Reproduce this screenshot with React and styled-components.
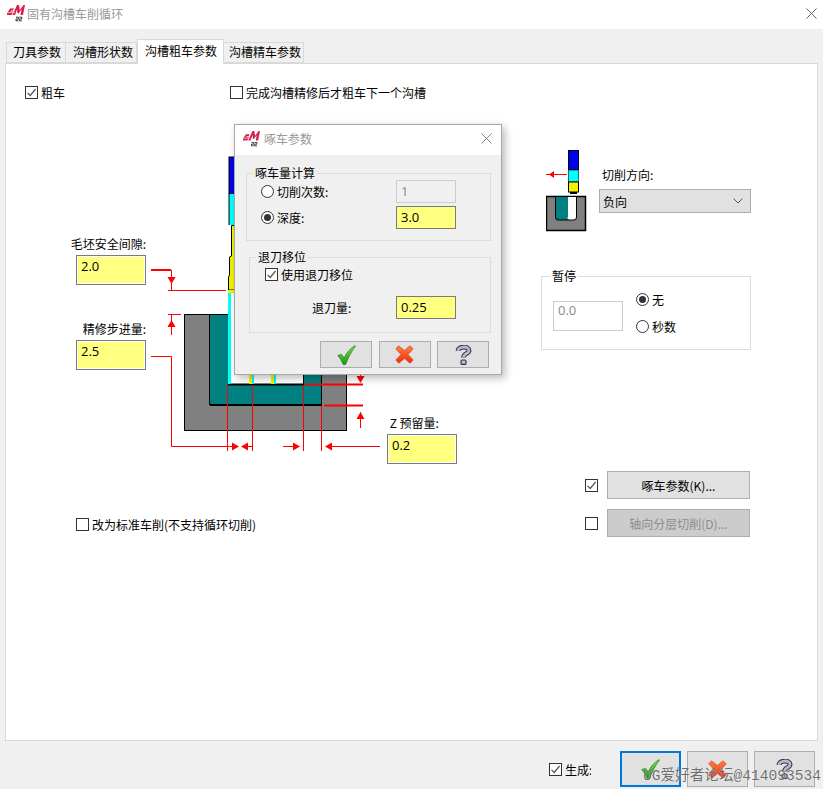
import React from 'react';
import styled, { createGlobalStyle } from 'styled-components';

const GlobalStyle = createGlobalStyle`
  html, body {
    margin: 0;
    padding: 0;
    background: #f0f0f0;
  }
  * {
    box-sizing: border-box;
  }
`;

const Window = styled.div`
  position: relative;
  width: 823px;
  height: 789px;
  overflow: hidden;
  display: flex;
  flex-direction: column;
  background: #f0f0f0;
  color: #000;
  font-family: "Noto Sans", "Noto Sans CJK SC", sans-serif;
  font-size: 12px;
`;

const TitleBar = styled.div`
  flex: none;
  height: ${({ $height }) => $height}px;
  padding: 0 ${({ $right }) => $right}px 3px ${({ $left }) => $left}px;
  display: flex;
  align-items: center;
  gap: ${({ $gap }) => $gap}px;
  background: #fff;
`;

const TitleText = styled.span`
  flex: 1;
  color: #999;
  font-family: "Noto Sans CJK SC", sans-serif;
  font-size: 12px;
`;

const TabStrip = styled.div`
  flex: none;
  height: 34px;
  padding: 9px 0 0 6px;
  display: flex;
  align-items: flex-end;
  position: relative;
  z-index: 1;
`;

const Tab = styled.div`
  height: ${({ $active }) => ($active ? 25 : 21)}px;
  margin-bottom: ${({ $active }) => ($active ? -1 : 0)}px;
  padding: 0 ${({ $trail }) => $trail}px ${({ $active }) => ($active ? 4 : 2)}px ${({ $lead }) => $lead}px;
  display: flex;
  align-items: center;
  background: ${({ $active }) => ($active ? '#fff' : '#f0f0f0')};
  border: 1px solid #d9d9d9;
  border-bottom: ${({ $active }) => ($active ? 'none' : '1px solid #d9d9d9')};
  border-left-width: ${({ $first, $active }) => ($first || $active ? 1 : 0)}px;
  font-family: "Noto Sans CJK SC", sans-serif;
`;

const Panel = styled.div`
  flex: none;
  height: 678px;
  margin: 0 5px 0 5px;
  background: #fff;
  border: 1px solid #d9d9d9;
  display: flex;
  flex-direction: column;
`;

const OptionsRow = styled.div`
  flex: none;
  height: 44px;
  padding: 21px 0 0 19px;
  display: grid;
  grid-template-columns: 205px 1fr;
  align-items: start;
`;

const Check = styled.label`
  display: inline-flex;
  align-items: center;
  gap: ${({ $gap = 3 }) => $gap}px;
  height: 14px;
  font-family: "Noto Sans CJK SC", sans-serif;
  white-space: nowrap;
`;

const CheckBox = styled.span`
  flex: none;
  width: 13px;
  height: 13px;
  border: 1px solid #333;
  background: #fff;
  display: flex;
  align-items: center;
  justify-content: center;
`;

const Workspace = styled.div`
  flex: none;
  height: 363px;
  display: grid;
  grid-template-columns: 535px 210px;
`;

const Diagram = styled.div`
  position: relative;
  margin-left: 54px;
  height: 100%;
`;

const DiagramArt = styled.svg`
  display: block;
  width: 480px;
  height: 363px;
`;

const DiagramField = styled.div`
  position: absolute;
  left: ${({ $x }) => $x - 60}px;
  top: ${({ $y }) => $y - 108}px;
  width: ${({ $width }) => $width}px;
  display: flex;
  flex-direction: column;
  align-items: ${({ $align }) => $align || 'flex-end'};
  gap: 3px;
  font-family: "Noto Sans CJK SC", sans-serif;
  white-space: nowrap;
`;

const NumberBox = styled.input`
  display: block;
  width: ${({ $width }) => $width}px;
  height: ${({ $height }) => $height}px;
  padding: 0 0 ${({ $drop = 4 }) => $drop}px 4px;
  border: 1px solid ${({ disabled }) => (disabled ? '#cccccc' : '#7a7a7a')};
  outline: none;
  border-radius: 0;
  background: ${({ disabled }) => (disabled ? 'transparent' : '#ffff80')};
  box-shadow: ${({ $ring }) => ($ring ? 'inset 0 0 0 1px #fff' : 'none')};
  color: ${({ disabled }) => (disabled ? '#8a8a8a' : '#000')};
  font-family: "Open Sans", sans-serif;
  font-size: 13px;
`;

const SideColumn = styled.div`
  display: flex;
  flex-direction: column;
  padding-top: 42px;
`;

const DirectionRow = styled.div`
  display: flex;
  height: 119px;
  padding-left: 5px;
  gap: 12px;
`;

const DirectionControl = styled.div`
  width: 152px;
  padding-top: 16px;
  font-family: "Noto Sans CJK SC", sans-serif;
  display: flex;
  flex-direction: column;
  gap: 6px;

  span {
    padding-left: 3px;
  }
`;

const Dropdown = styled.div`
  height: 24px;
  padding: 0 7px 0 3px;
  display: flex;
  align-items: center;
  justify-content: space-between;
  background: #e1e1e1;
  border: 1px solid #adadad;
`;

const PauseGroup = styled.fieldset`
  margin: 0;
  height: 81px;
  padding: 18px 0 0 11px;
  border: 1px solid #dcdcdc;
  display: flex;
  gap: 13px;
  font-family: "Noto Sans CJK SC", sans-serif;
`;

const GroupTitle = styled.legend`
  padding: 0 2px;
  margin-left: ${({ $indent = 6 }) => $indent}px;
  font-family: "Noto Sans CJK SC", sans-serif;
  font-size: 12px;
  line-height: 14px;
`;

const RadioColumn = styled.div`
  display: flex;
  flex-direction: column;
  gap: 13px;
  margin-top: -9px;
`;

const Radio = styled.label`
  display: flex;
  align-items: center;
  gap: 3px;
  height: 14px;
  font-family: "Noto Sans CJK SC", sans-serif;
`;

const RadioDot = styled.span`
  flex: none;
  width: 13px;
  height: 13px;
  border-radius: 50%;
  border: 1px solid #333;
  background: #fff;
  display: flex;
  align-items: center;
  justify-content: center;

  &::after {
    content: "";
    display: ${({ $on }) => ($on ? 'block' : 'none')};
    width: 7px;
    height: 7px;
    border-radius: 50%;
    background: #333;
  }
`;

const LowerRow = styled.div`
  flex: none;
  display: flex;
  justify-content: space-between;
  align-items: flex-end;
  padding: 0 67px 0 70px;
`;

const StandardTurn = styled.div`
  padding-bottom: 2px;
`;

const ActionColumn = styled.div`
  display: flex;
  flex-direction: column;
  gap: 10px;
`;

const ActionRow = styled.div`
  display: flex;
  align-items: center;
  gap: 9px;
`;

const Button = styled.button`
  flex: none;
  width: ${({ $width }) => $width}px;
  height: ${({ $height }) => $height}px;
  padding: 0;
  display: flex;
  align-items: center;
  justify-content: center;
  background: ${({ disabled }) => (disabled ? '#cccccc' : '#e1e1e1')};
  border: ${({ $focus }) => ($focus ? '2px solid #0078d7' : '1px solid #adadad')};
  border-radius: 0;
  color: ${({ disabled }) => (disabled ? '#8c8c8c' : '#000')};
  font-family: "Noto Sans CJK SC", sans-serif;
  font-size: 12px;
`;

const Footer = styled.div`
  flex: 1;
  padding: 10px 8px 0 0;
  display: flex;
  justify-content: flex-end;
  align-items: flex-start;
  gap: 6px;
`;

const GenerateSlot = styled.div`
  width: 42px;
  height: 36px;
  margin-right: 23px;
  display: flex;
  align-items: center;
  overflow: hidden;
`;

const Watermark = styled.div`
  position: absolute;
  left: 643px;
  top: 766px;
  color: rgba(55, 55, 55, 0.72);
  font-family: "Liberation Mono", "Noto Sans CJK SC", monospace;
  font-size: 14.6px;
  line-height: 20px;
  white-space: nowrap;
  text-shadow: 0 0 1px rgba(255, 255, 255, 0.9);
`;

const Dialog = styled.div`
  position: absolute;
  left: 234px;
  top: 124px;
  width: 268px;
  height: 251px;
  background: #f0f0f0;
  border: 1px solid #a8a8a8;
  box-shadow: 3px 3px 8px rgba(0, 0, 0, 0.28);
  display: flex;
  flex-direction: column;
`;

const DialogBody = styled.div`
  flex: 1;
  padding: 11px 10px 0 11px;
  display: flex;
  flex-direction: column;
`;

const CalcGroup = styled.fieldset`
  margin: 0;
  height: 75px;
  padding: 0 0 0 14px;
  border: 1px solid #dcdcdc;
  display: grid;
  grid-template-columns: 135px 60px;
  grid-auto-rows: 23px;
  row-gap: 3px;
  align-items: center;
  align-content: start;
`;

const RetractGroup = styled.fieldset`
  margin: 9px 0 0 3px;
  height: 83px;
  padding: 0;
  border: 1px solid #dcdcdc;
  display: flex;
  flex-direction: column;
  font-family: "Noto Sans CJK SC", sans-serif;
`;

const RetractCheck = styled.div`
  padding: 2px 0 0 15px;
`;

const RetractAmount = styled.div`
  margin-top: 13px;
  padding-left: 62px;
  display: grid;
  grid-template-columns: 84px 60px;
  align-items: center;
`;

const DialogButtons = styled.div`
  margin: 8px 2px 0 0;
  display: flex;
  justify-content: flex-end;
  gap: 6.5px;
`;

const CheckMark = () => (
  <svg width="11" height="11" viewBox="0 0 11 11">
    <path d="M1.5 5.8 L4.2 8.5 L9.6 2" fill="none" stroke="#555" strokeWidth="1.2" />
  </svg>
);

const Tick = ({ on, children, gap }) => (
  <Check $gap={gap}>
    <CheckBox>{on && <CheckMark />}</CheckBox>
    {children}
  </Check>
);

const Logo = ({ size = 18 }) => (
  <svg width={size} height={size} viewBox="0 0 18 18">
    <path d="M0 9.5 L3 4.5 H7 L6 6.5 H4 L3.5 7.5 H6.2 L4.6 11 H0 Z" fill="#d6204d" />
    <path d="M5.5 11 L10 1 H12 L12.8 6 L16.5 1 H18 L16 11 H13.5 L14.5 5.5 L11.5 9.5 H10.5 L10 5.5 L8 11 Z" fill="#d6204d" />
    <path d="M0 8.2 L8 7.6 L7.5 8.8 L0 9.2 Z" fill="#eeb0c0" />
    <path d="M9 13.2 H11.4 V15 H9 V16.8 H11.4 M12.4 13.2 H14.8 V15 H12.4 V16.8 H14.8" fill="none" stroke="#222" strokeWidth="0.9" />
  </svg>
);

const CloseGlyph = ({ size, color }) => (
  <svg width={size} height={size} viewBox="0 0 12 12">
    <path d="M0.5 0.5 L11.5 11.5 M11.5 0.5 L0.5 11.5" stroke={color} strokeWidth="1" fill="none" />
  </svg>
);

const OkIcon = () => (
  <svg width="19" height="20" viewBox="0 0 19 20">
    <defs>
      <linearGradient id="okFill" x1="0" y1="0" x2="0" y2="1">
        <stop offset="0" stopColor="#8fe04a" />
        <stop offset="1" stopColor="#129a12" />
      </linearGradient>
    </defs>
    <path d="M0.8 10.5 L4.6 9.4 L7.2 13 C9.5 8 13 3.6 18 0.6 L18.4 1.4 C14.5 6 11.5 12 8.6 19.4 L6.2 19.4 C4.8 16 3 13 0.8 10.5 Z" fill="url(#okFill)" stroke="#1a7a1a" strokeWidth="0.7" />
  </svg>
);

const CancelIcon = () => (
  <svg width="19" height="19" viewBox="0 0 19 19">
    <defs>
      <linearGradient id="noFill" x1="0" y1="0" x2="0" y2="1">
        <stop offset="0" stopColor="#ff8040" />
        <stop offset="1" stopColor="#ee2a10" />
      </linearGradient>
    </defs>
    <path d="M3.5 0.8 L9.5 5.4 L15 0.8 L18.2 3.8 L13 9.5 L18.2 15 L15 18.2 L9.5 13.4 L3.8 18.2 L0.8 15 L6 9.5 L0.8 3.8 Z" fill="url(#noFill)" stroke="#d8401a" strokeWidth="0.7" strokeLinejoin="round" />
  </svg>
);

const HelpIcon = () => (
  <svg width="17" height="20" viewBox="0 0 17 20">
    <path d="M3 6 C3 1 14 0.6 14 5.4 C14 8.8 8.5 8.4 8.5 12.5" fill="none" stroke="#34344a" strokeWidth="4.8" />
    <path d="M3 6 C3 1 14 0.6 14 5.4 C14 8.8 8.5 8.4 8.5 12.5" fill="none" stroke="#b8b8ca" strokeWidth="2.8" />
    <rect x="6" y="15" width="5" height="4.4" rx="1" fill="#b8b8ca" stroke="#34344a" strokeWidth="1.1" />
  </svg>
);

const ArrowHead = ({ x, y, dir }) => {
  const shapes = {
    right: `${x},${y - 4} ${x + 7},${y} ${x},${y + 4}`,
    left: `${x},${y - 4} ${x - 7},${y} ${x},${y + 4}`,
    down: `${x - 4},${y} ${x},${y + 7} ${x + 4},${y}`,
    up: `${x - 4},${y} ${x},${y - 7} ${x + 4},${y}`,
  };
  return <polygon points={shapes[dir]} fill="#f00" />;
};

// drawn in page coordinates, hence the offset viewBox
const GrooveDiagram = () => (
  <DiagramArt viewBox="60 108 480 363">
    <rect x="184.5" y="314.5" width="162" height="116" fill="#808080" stroke="#000" />
    <rect x="209.5" y="314.5" width="112" height="90" fill="#008080" stroke="#000" />
    <path d="M210 405 H322" stroke="#000" strokeWidth="2" />
    <rect x="228.5" y="314" width="75" height="70.5" fill="#fff" />
    <path d="M228.5 314 V384.5 H303.5 V314" fill="none" stroke="#000" />
    <path d="M228 384.5 H304" stroke="#000" strokeWidth="2" />

    <rect x="229" y="157" width="8" height="37" fill="#0000f0" stroke="#000" />
    <rect x="229" y="194" width="8" height="31" fill="#00ffff" />
    <path d="M229 194 V225" stroke="#000" />
    <path d="M231.5 225.5 H240 V290 H228.5 V277 L229.5 275 V257 L231.5 256 Z" fill="#f2f200" stroke="#000" />
    <rect x="228" y="290" width="10" height="3" fill="#f2f200" />
    <rect x="228" y="293" width="3" height="91" fill="#00ffff" />
    <rect x="249" y="360" width="3" height="24" fill="#f2f200" />
    <rect x="252" y="360" width="2" height="24" fill="#00ffff" />
    <rect x="271" y="360" width="3" height="24" fill="#f2f200" />
    <rect x="274" y="360" width="2" height="24" fill="#00ffff" />

    <g stroke="#f00" fill="none">
      <path d="M151 270 H171" strokeWidth="2" />
      <path d="M171.5 270 V290.5" />
      <path d="M168 290.5 H226" />
      <path d="M168 314.5 H181 M171.5 314.5 V335" />
      <path d="M151 356.5 H171.5 V446.5 H228" />
      <path d="M227.5 385 V451 M252.5 385 V451 M303.5 385 V451 M321.5 406 V451" />
      <path d="M228 446.5 H233 M247 446.5 H252 M283 446.5 H294 M331 446.5 H380" />
      <path d="M305 384.5 H363 M324 405.5 H363" strokeWidth="2" />
      <path d="M360.5 360 V380 M360.5 412 V428" />
    </g>
    <ArrowHead x={171.5} y={277} dir="down" />
    <ArrowHead x={171.5} y={327} dir="up" />
    <ArrowHead x={232} y={446.5} dir="right" />
    <ArrowHead x={248} y={446.5} dir="left" />
    <ArrowHead x={293} y={446.5} dir="right" />
    <ArrowHead x={332} y={446.5} dir="left" />
    <ArrowHead x={360.5} y={376} dir="down" />
    <ArrowHead x={360.5} y={419} dir="up" />
  </DiagramArt>
);

const DirectionArt = () => (
  <svg width="41" height="82" viewBox="546 150 41 82">
    <rect x="568.5" y="150.5" width="10" height="19" fill="#0000f0" stroke="#000" />
    <rect x="568.5" y="170" width="10" height="12" fill="#00ffff" stroke="#000" strokeWidth="0.6" />
    <rect x="568.5" y="182" width="10" height="10" fill="#f2f200" stroke="#000" />
    <rect x="570" y="192" width="7" height="2" fill="#000" />
    <path d="M546 174.5 H567" stroke="#f00" />
    <polygon points="549,174.5 554,171 554,178" fill="#f00" />
    <rect x="546.5" y="196.5" width="39" height="34" fill="#808080" stroke="#000" strokeWidth="1.5" />
    <rect x="555.5" y="197" width="21" height="23" fill="#008080" />
    <path d="M567.5 197 V217 Q567.5 220 570 220 H574 Q576.5 220 576.5 217 V197 Z" fill="#fff" />
    <path d="M555.5 197 V217 Q555.5 220 558 220 H574 Q576.5 220 576.5 217 V197" fill="none" stroke="#000" />
    <path d="M567.5 197 V217" stroke="#008080" />
  </svg>
);

const Chevron = () => (
  <svg width="10" height="6" viewBox="0 0 10 6">
    <path d="M0.5 0.5 L5 5 L9.5 0.5" fill="none" stroke="#555" />
  </svg>
);

export default function App() {
  return (
    <Window>
      <GlobalStyle />
      <TitleBar $height={29} $left={7} $right={6} $gap={2}>
        <Logo />
        <TitleText>固有沟槽车削循环</TitleText>
        <CloseGlyph size={11} color="#555" />
      </TitleBar>
      <TabStrip>
        <Tab $first $lead={6} $trail={4}>刀具参数</Tab>
        <Tab $lead={7} $trail={3}>沟槽形状数</Tab>
        <Tab $active $lead={7} $trail={6}>沟槽粗车参数</Tab>
        <Tab $lead={5} $trail={2}>沟槽精车参数</Tab>
      </TabStrip>
      <Panel>
        <OptionsRow>
          <div><Tick on>粗车</Tick></div>
          <div><Tick>完成沟槽精修后才粗车下一个沟槽</Tick></div>
        </OptionsRow>
        <Workspace>
          <Diagram>
            <GrooveDiagram />
            <DiagramField $x={71} $y={235} $width={75}>
              <span>毛坯安全间隙:</span>
              <NumberBox $width={70} $height={30} $drop={9} $ring defaultValue="2.0" readOnly />
            </DiagramField>
            <DiagramField $x={76} $y={320} $width={70}>
              <span>精修步进量:</span>
              <NumberBox $width={70} $height={30} $drop={9} $ring defaultValue="2.5" readOnly />
            </DiagramField>
            <DiagramField $x={387} $y={414} $width={70} $align="flex-start">
              <span>&nbsp;Z 预留量:</span>
              <NumberBox $width={70} $height={30} $drop={9} $ring defaultValue="0.2" readOnly />
            </DiagramField>
          </Diagram>
          <SideColumn>
            <DirectionRow>
              <DirectionArt />
              <DirectionControl>
                <span>切削方向:</span>
                <Dropdown>负向<Chevron /></Dropdown>
              </DirectionControl>
            </DirectionRow>
            <PauseGroup>
              <GroupTitle $indent={-3}>暂停</GroupTitle>
              <NumberBox $width={70} $height={30} $drop={12} disabled defaultValue="0.0" />
              <RadioColumn>
                <Radio><RadioDot $on />无</Radio>
                <Radio><RadioDot />秒数</Radio>
              </RadioColumn>
            </PauseGroup>
          </SideColumn>
        </Workspace>
        <LowerRow>
          <StandardTurn>
            <Tick>改为标准车削(不支持循环切削)</Tick>
          </StandardTurn>
          <ActionColumn>
            <ActionRow>
              <CheckBox><CheckMark /></CheckBox>
              <Button $width={143} $height={28}>啄车参数(K)...</Button>
            </ActionRow>
            <ActionRow>
              <CheckBox />
              <Button $width={143} $height={28} disabled>轴向分层切削(D)...</Button>
            </ActionRow>
          </ActionColumn>
        </LowerRow>
      </Panel>
      <Footer>
        <GenerateSlot><Tick on>生成:</Tick></GenerateSlot>
        <Button $width={61} $height={36} $focus><OkIcon /></Button>
        <Button $width={61} $height={36}><CancelIcon /></Button>
        <Button $width={61} $height={36}><HelpIcon /></Button>
      </Footer>
      <Watermark>UG爱好者论坛@414093534</Watermark>

      <Dialog>
        <TitleBar $height={30} $left={8} $right={9} $gap={4}>
          <Logo size={17} />
          <TitleText>啄车参数</TitleText>
          <CloseGlyph size={11} color="#777" />
        </TitleBar>
        <DialogBody>
          <CalcGroup>
            <GroupTitle $indent={-8}>啄车量计算</GroupTitle>
            <Radio><RadioDot />切削次数:</Radio>
            <NumberBox $width={60} $height={23} $drop={2} disabled defaultValue="1" />
            <Radio><RadioDot $on />深度:</Radio>
            <NumberBox $width={60} $height={23} $drop={2} defaultValue="3.0" readOnly />
          </CalcGroup>
          <RetractGroup>
            <GroupTitle $indent={6}>退刀移位</GroupTitle>
            <RetractCheck><Tick on>使用退刀移位</Tick></RetractCheck>
            <RetractAmount>
              <span>退刀量:</span>
              <NumberBox $width={60} $height={23} $drop={2} defaultValue="0.25" readOnly />
            </RetractAmount>
          </RetractGroup>
          <DialogButtons>
            <Button $width={52} $height={27}><OkIcon /></Button>
            <Button $width={52} $height={27}><CancelIcon /></Button>
            <Button $width={52} $height={27}><HelpIcon /></Button>
          </DialogButtons>
        </DialogBody>
      </Dialog>
    </Window>
  );
}
